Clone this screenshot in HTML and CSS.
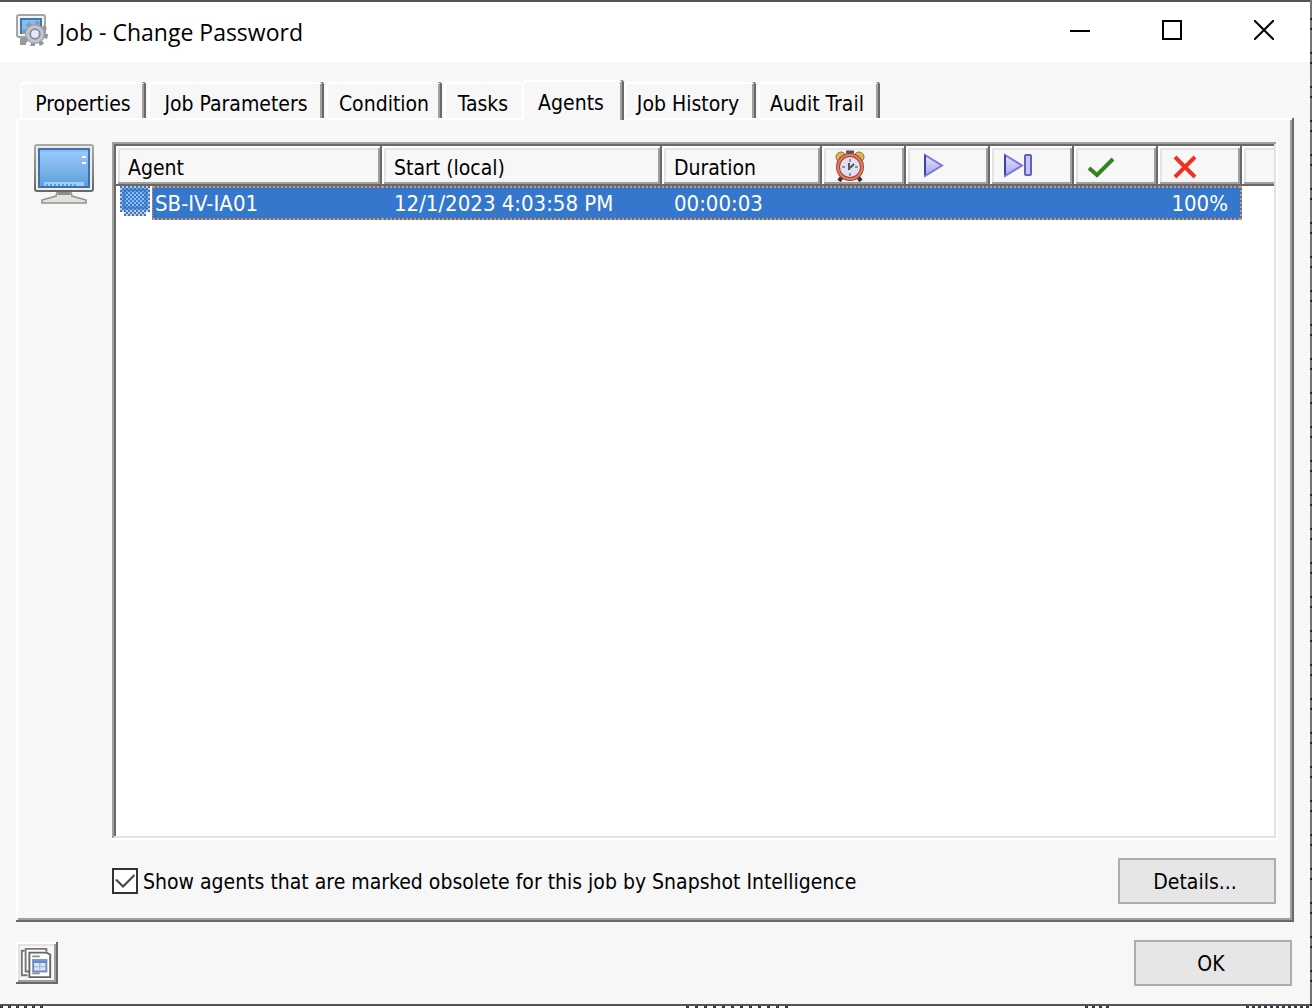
FILE: index.html
```
<!DOCTYPE html>
<html lang="en">
<head>
  <meta charset="UTF-8" />
  <meta name="viewport" content="width=device-width, initial-scale=1.0" />
  <title>Job - Change Password</title>
  <link rel="stylesheet" href="styles.css">
</head>
<body>
  <div class="window">
    <header class="titlebar">
      <svg class="app-icon" viewBox="0 0 16 16" aria-hidden="true">
        <rect x="0.5" y="0.5" width="14" height="11" rx="1" fill="#f4f4f2" stroke="#a5a5a0" />
        <rect x="2" y="2" width="11" height="8" fill="#3c78b8" />
        <rect x="3" y="3" width="9" height="6" fill="#86bdf0" />
        <path d="M2 12h3v3.500h-3z" fill="#9a9a9e" />
        <circle cx="9.5" cy="10" r="5.5" fill="none" stroke="#94979f" stroke-width="2" stroke-dasharray="2.2 2.1" />
        <circle cx="9.5" cy="10" r="4.7" fill="#c3c6cf" stroke="#9a9da6" stroke-width="0.6" />
        <circle cx="9.5" cy="10" r="2.4" fill="#e6e8f4" stroke="#868a9c" stroke-width="0.9" />
      </svg>
      <h1>Job - Change Password</h1>
      <div class="window-controls">
        <button aria-label="Minimize"><svg viewBox="0 0 20 20"><path d="M0 11h20" /></svg></button>
        <button aria-label="Maximize"><svg viewBox="0 0 20 20"><path d="M1 1h18v18h-18z" /></svg></button>
        <button aria-label="Close"><svg viewBox="0 0 20 20"><path d="M0 0l20 20M20 0l-20 20" /></svg></button>
      </div>
    </header>

    <main class="content">
      <div class="tabs" role="tablist">
        <button class="tab tab-properties" role="tab">Properties</button>
        <button class="tab tab-parameters" role="tab">Job Parameters</button>
        <button class="tab tab-condition" role="tab">Condition</button>
        <button class="tab tab-tasks" role="tab">Tasks</button>
        <button class="tab tab-agents active" role="tab" aria-selected="true">Agents</button>
        <button class="tab tab-history" role="tab">Job History</button>
        <button class="tab tab-audit" role="tab">Audit Trail</button>
      </div>

      <section class="panel" role="tabpanel">
        <svg class="monitor" viewBox="0 0 30 30" aria-hidden="true">
          <defs>
            <linearGradient id="screen" x2="0" y2="1">
              <stop offset="0" stop-color="#9ccbff" />
              <stop offset="1" stop-color="#5d9fd8" />
            </linearGradient>
            <linearGradient id="frame" x2="0" y2="1">
              <stop offset="0" stop-color="#aaaaa5" />
              <stop offset="1" stop-color="#686866" />
            </linearGradient>
          </defs>
          <path d="M12 23h6l1 3 7 2v1.5h-22v-1.5l7-2z" fill="#e2e2df" stroke="#92928e" stroke-width="0.8" />
          <path d="M12 24h6v1.5h-6z" fill="#8c8c88" />
          <rect x="0.5" y="0.5" width="29" height="23" rx="1" fill="#ecece9" stroke="url(#frame)" />
          <rect x="2.5" y="2.5" width="25" height="19" fill="url(#screen)" stroke="#3f72ad" />
          <path d="M3 3.5h24" stroke="#8cbdf0" />
          <path d="M5 19h20v2h-20z" fill="#a3cdf4" />
          <path d="M6 20.5h15" stroke="#5f9cd6" stroke-dasharray="1 1" />
          <path d="M24 6.5h2M24 9.5h2" stroke="#fff" />
        </svg>

        <div class="list">
          <table>
            <colgroup>
              <col class="col-agent">
              <col class="col-start">
              <col class="col-duration">
              <col class="col-count">
              <col class="col-count">
              <col class="col-count">
              <col class="col-count">
              <col class="col-count">
              <col>
            </colgroup>
            <thead>
              <tr>
                <th>Agent</th>
                <th>Start (local)</th>
                <th>Duration</th>
                <th>
                  <svg viewBox="0 0 32 32" role="img" aria-label="Scheduled">
                    <path d="M8 27l-3 4M24 27l3 4" stroke="#333" stroke-width="4" />
                    <path d="M12 2h8M16 1v5" stroke="#555" stroke-width="3" />
                    <circle cx="7" cy="7" r="5" fill="#d9b65c" stroke="#9b7527" />
                    <circle cx="25" cy="7" r="5" fill="#d9b65c" stroke="#9b7527" />
                    <circle cx="16" cy="17" r="12" fill="#dfe1ee" stroke="#a74233" stroke-width="4" />
                    <circle cx="16" cy="17" r="12" fill="none" stroke="#df7e67" stroke-width="2" />
                    <path d="M16 9v3M16 23v3M8 17h3M21 17h3" stroke="#8c8db8" stroke-width="2" />
                    <path d="M15 13v7M16 18l4-4" stroke="#555" stroke-width="2" fill="none" />
                  </svg>
                </th>
                <th>
                  <svg viewBox="0 0 32 32" role="img" aria-label="Running">
                    <defs>
                      <linearGradient id="play" x2="0" y2="1">
                        <stop offset="0" stop-color="#e4e4ff" />
                        <stop offset="1" stop-color="#a4a4ef" />
                      </linearGradient>
                    </defs>
                    <path d="M7 5v21l17-10.500z" fill="url(#play)" stroke="#7c7ccc" stroke-width="2" />
                    <path d="M7 5v20" stroke="#4040aa" stroke-width="2" />
                  </svg>
                </th>
                <th>
                  <svg viewBox="0 0 32 32" role="img" aria-label="Waiting">
                    <path d="M3 5v21l17-10.500z" fill="url(#play)" stroke="#7c7ccc" stroke-width="2" />
                    <path d="M3 5v20" stroke="#4040aa" stroke-width="2" />
                    <rect x="23" y="5" width="6" height="20" rx="1" fill="#c5c5ff" stroke="#6060be" stroke-width="2" />
                  </svg>
                </th>
                <th>
                  <svg viewBox="0 0 32 32" role="img" aria-label="Succeeded">
                    <path d="M3 18l8 7L27 9" fill="none" stroke="#378221" stroke-width="4" />
                  </svg>
                </th>
                <th>
                  <svg viewBox="0 0 32 32" role="img" aria-label="Failed">
                    <path d="M5 7l20 20M25 7L5 27" stroke="#ea3323" stroke-width="4" />
                  </svg>
                </th>
                <th class="filler"></th>
              </tr>
            </thead>
            <tbody>
              <tr>
                <td class="agent">
                  <div class="agent-cell">
                    <svg viewBox="0 0 30 30" aria-hidden="true">
                      <defs>
                        <pattern id="dither" width="4" height="4" patternUnits="userSpaceOnUse">
                          <path d="M0 0h2v2h-2zM2 2h2v2h-2z" fill="#3677ce" />
                        </pattern>
                      </defs>
                      <path d="M0 0h30v26h-4v4h-22v-4h-4z" fill="#c9cdd2" />
                      <path d="M4 4h22v18h-22z" fill="#8cc0f5" />
                      <path d="M4 4h22v18h-22z" fill="none" stroke="#4f88cc" stroke-width="3" />
                      <path d="M0 0h30v26h-4v4h-22v-4h-4z" fill="url(#dither)" />
                    </svg>
                    <span class="agent-name">SB-IV-IA01</span>
                  </div>
                </td>
                <td class="selected">12/1/2023 4:03:58 PM</td>
                <td class="selected">00:00:03</td>
                <td class="selected"></td>
                <td class="selected"></td>
                <td class="selected"></td>
                <td class="selected"></td>
                <td class="selected percent">100%</td>
                <td></td>
              </tr>
            </tbody>
          </table>
        </div>

        <div class="options">
          <label class="obsolete">
            <input type="checkbox" checked>
            <span>Show agents that are marked obsolete for this job by Snapshot Intelligence</span>
          </label>
          <button class="push-button">Details...</button>
        </div>
      </section>

      <footer class="footer">
        <button class="tool-button" aria-label="Copy view">
          <svg viewBox="0 0 18 18">
            <path d="M3 2.500h-1.500v13h3" fill="#fff" stroke="#777" />
            <path d="M14.500 3v-1.500h-11v12h2" fill="#fff" stroke="#777" />
            <path d="M5.500 3.500h9l2 1v12h-11z" fill="#fff" stroke="#666" />
            <path d="M7 5.500h4M7 14.500h4" stroke="#8c8c8c" />
            <path d="M7 7h8v7h-8z" fill="#7489b4" />
            <path d="M7 7.500h8" stroke="#6996f0" />
            <path d="M8 9h6v4h-6z" fill="#d6e4f8" />
            <path d="M8 11h6M11 9v4" stroke="#97b3e0" stroke-width="0.6" />
          </svg>
        </button>
        <button class="push-button">OK</button>
      </footer>
    </main>
  </div>
</body>
</html>
```
FILE: styles.css
```
* {
  box-sizing: border-box;
}
/* the window behind shows as a thin strip on the right and at the bottom */
body {
  margin: 0;
  padding: 0 2px 2px 0;
  display: flex;
  flex-direction: column;
  min-height: 100vh;
  background:
    repeating-linear-gradient(90deg, #335 0 3px, white 3px 8px) left bottom / 44px 2px no-repeat,
    repeating-linear-gradient(90deg, #335 0 3px, white 3px 9px) 686px bottom / 104px 2px no-repeat,
    repeating-linear-gradient(90deg, #335 0 3px, white 3px 7px) 1085px bottom / 26px 2px no-repeat,
    repeating-linear-gradient(90deg, #335 0 3px, white 3px 6px) right bottom / 66px 2px no-repeat,
    linear-gradient(white, white) left bottom / 100% 2px no-repeat,
    repeating-linear-gradient(#747474 0 18px, #222 18px 20px, #747474 20px 28px, #222 28px 30px, #747474 30px 34px);
  color: black;
  font-family: "DejaVu Sans Condensed", "Noto Sans", sans-serif;
  font-size: 21px;
  line-height: 28px;
}
button {
  font: inherit;
  color: inherit;
}
.window {
  flex: 1;
  display: flex;
  flex-direction: column;
  background: #f7f7f7;
  border-top: 2px solid #555353;
  border-bottom: 2px solid #555353;
}

/* title bar */
.titlebar {
  display: flex;
  height: 60px;
  padding-left: 16px;
  background: white;
}
.app-icon {
  width: 32px;
  height: 32px;
  margin: 12px 9px 0 0;
}
.titlebar h1 {
  flex: 1;
  margin: 0;
  padding-left: 2px;
  font-family: "Open Sans", "Noto Sans", sans-serif;
  font-size: 23px;
  font-weight: normal;
  line-height: 60px;
}
.window-controls {
  display: flex;
}
.window-controls button {
  display: flex;
  justify-content: center;
  align-items: center;
  width: 92px;
  height: 56px;
  padding: 0;
  border: none;
  background: none;
}
.window-controls svg {
  width: 20px;
  height: 20px;
  fill: none;
  stroke: black;
  stroke-width: 2;
}

/* tabs */
.content {
  flex: 1;
  display: flex;
  flex-direction: column;
  padding: 18px 16px 18px;
}
.tabs {
  display: flex;
  align-items: flex-end;
  padding-left: 4px;
}
.tab {
  height: 36px;
  margin-right: 2px;
  padding: 8px 0 0;
  border: none;
  border-radius: 4px 3px 0 0;
  background: #f7f7f7;
  box-shadow: inset -2px 0 #696969, inset 2px 2px white, inset -4px 0 #a0a0a0;
  white-space: nowrap;
}
.tab-properties { width: 126px; }
.tab-parameters { width: 176px; }
.tab-condition { width: 116px; }
.tab-tasks {
  width: 78px;
  margin-right: 0;
  box-shadow: inset 2px 2px white;
}
.tab-agents {
  width: 102px;
  margin-right: 0;
}
.tab-history { width: 132px; }
.tab-audit { width: 122px; }
.tab.active {
  position: relative;
  height: 40px;
  margin-bottom: -2px;
  padding: 6px 4px 0 0;
}
.tab-history,
.tab-audit {
  padding-right: 4px;
}

/* tab page */
.panel {
  flex: 1;
  display: grid;
  grid-template-columns: 60px 1fr;
  grid-template-rows: 1fr auto;
  column-gap: 18px;
  row-gap: 18px;
  padding: 24px 16px 18px 18px;
  box-shadow: inset -2px -2px #696969, inset 2px 2px white, inset -4px -4px #a0a0a0;
}
.monitor {
  width: 60px;
  height: 60px;
  margin-top: 2px;
}
.list {
  padding: 4px;
  background: white;
  box-shadow: inset -2px -2px white, inset 2px 2px #a0a0a0, inset -4px -4px #e3e3e3, inset 4px 4px #696969;
}
table {
  width: 100%;
  table-layout: fixed;
  border-spacing: 0;
}
.col-agent { width: 266px; }
.col-start { width: 280px; }
.col-duration { width: 160px; }
.col-count { width: 84px; }
th {
  height: 40px;
  padding: 4px 0 0 12px;
  text-align: left;
  font-weight: normal;
  background: #f7f7f7;
  box-shadow: inset -2px -2px #696969, inset 2px 2px white, inset -4px -4px #a0a0a0, inset 4px 4px #e3e3e3;
}
th svg {
  display: block;
  width: 32px;
  height: 32px;
  margin-top: -4px;
}
th.filler {
  box-shadow: inset 0 -2px #696969, inset 2px 2px white, inset 0 -4px #a0a0a0, inset 4px 4px #e3e3e3;
}
td {
  height: 34px;
  padding: 2px 0 0 12px;
  font-size: 22px;
}
td.agent {
  padding: 0 0 0 4px;
}
.agent-cell {
  display: flex;
  height: 34px;
}
.agent-cell svg {
  width: 30px;
  height: 30px;
  margin-right: 2px;
}
.selected,
.agent-name {
  color: white;
  background:
    repeating-linear-gradient(90deg, #f09040 0 2px, transparent 2px 4px) top / 100% 2px no-repeat,
    repeating-linear-gradient(90deg, #f09040 0 2px, transparent 2px 4px) bottom / 100% 2px no-repeat,
    #3677ce;
}
.agent-name {
  flex: 1;
  padding-left: 2px;
  line-height: 36px;
  border-left: 1px dotted #f09040;
}
.selected.percent {
  padding-right: 12px;
  text-align: right;
  border-right: 2px dotted #f09040;
}

/* below the list */
.options {
  grid-column: 2;
  display: flex;
  justify-content: space-between;
  align-items: center;
  padding-right: 2px;
}
.obsolete {
  display: flex;
  align-items: center;
  gap: 5px;
}
.obsolete span {
  padding-top: 2px;
}
.obsolete input {
  appearance: none;
  width: 26px;
  height: 26px;
  margin: 0;
  border: 2px solid #333;
  background: white;
}
.obsolete input:checked::after {
  content: "";
  display: block;
  width: 22px;
  height: 22px;
  background: #444;
  clip-path: polygon(1px 10px, 3px 9px, 9px 15px, 20px 4px, 21px 6px, 9px 18px);
}
.push-button {
  width: 158px;
  height: 46px;
  padding: 2px 4px 0 0;
  border: 2px solid #adadad;
  background: #e6e6e6;
}
.footer {
  display: flex;
  justify-content: space-between;
  align-items: center;
  padding: 18px 2px 0 0;
}
.tool-button {
  width: 42px;
  height: 42px;
  padding: 3px;
  border: none;
  background: #f7f7f7;
  box-shadow: inset -2px -2px #696969, inset 2px 2px white, inset -4px -4px #a0a0a0, inset 4px 4px #e3e3e3;
}
.tool-button svg {
  display: block;
  width: 34px;
  height: 34px;
}
```
